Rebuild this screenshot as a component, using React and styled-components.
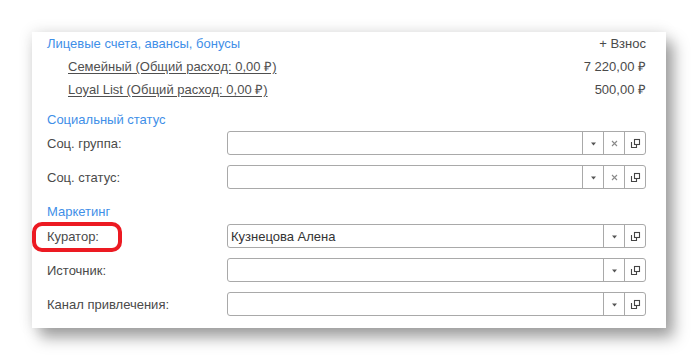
import React from "react";
import styled, { createGlobalStyle } from "styled-components";

const GlobalStyle = createGlobalStyle`
  html, body {
    margin: 0;
    padding: 0;
    background: #ffffff;
    font-family: "Liberation Sans", Arial, sans-serif;
  }
`;

const Page = styled.div`
  width: 698px;
  height: 361px;
  padding: 32px 0 0 32px;
  box-sizing: border-box;
`;

const Card = styled.div`
  width: 634px;
  height: 296px;
  box-sizing: border-box;
  background: #fff;
  padding: 0 20px 12px 15px;
  box-shadow: 0 0 14px rgba(0, 0, 0, 0.12), 8px 10px 14px rgba(0, 0, 0, 0.34);
  display: flex;
  flex-direction: column;
`;

const Row = styled.div`
  display: flex;
  align-items: center;
  height: ${(p) => p.$h || 23}px;
  margin-top: ${(p) => p.$mt || 0}px;
  font-size: 13px;
  color: #4a4a4a;
  position: relative;
`;

const SectionTitle = styled.div`
  flex: 1;
  color: #3f8fe8;
`;

const Action = styled.div`
  color: #4a4a4a;
`;

const SubLink = styled.a`
  margin-left: 21px;
  flex: 1;
  color: #4f4f4f;
  text-decoration: underline;
  text-underline-offset: 2px;
`;

const Amount = styled.div`
  color: #4a4a4a;
`;

const Label = styled.div`
  width: 180px;
  flex-shrink: 0;
  color: #4a4a4a;
  position: relative;
`;

const Highlight = styled.div`
  position: absolute;
  left: -15px;
  top: -7px;
  width: 90px;
  height: 30px;
  box-sizing: border-box;
  border: 4px solid #ec1a22;
  border-radius: 10px;
`;

const Field = styled.div`
  flex: 1;
  height: 24px;
  box-sizing: border-box;
  border: 1px solid #a9a9a9;
  border-radius: 3px;
  display: flex;
  background: #fff;
`;

const Input = styled.div`
  flex: 1;
  padding-left: 3px;
  display: flex;
  align-items: center;
  color: #333;
  font-size: 13px;
`;

const Btn = styled.div`
  width: 20px;
  flex-shrink: 0;
  border-left: 1px solid #a9a9a9;
  display: flex;
  align-items: center;
  justify-content: center;
`;

const ArrowIcon = () => (
  <svg width="7" height="4" viewBox="0 0 7 4" style={{ marginTop: 2 }}>
    <path d="M1 0.5 H6 L3.5 3.5 Z" fill="#555" />
  </svg>
);

const ClearIcon = () => (
  <svg width="7" height="7" viewBox="0 0 7 7">
    <path d="M1 1 L6 6 M6 1 L1 6" stroke="#8a8a8a" strokeWidth="1.1" />
  </svg>
);

const OpenIcon = () => (
  <svg width="11" height="11" viewBox="0 0 11 11">
    <rect x="4.5" y="1.5" width="5" height="5" fill="none" stroke="#444" strokeWidth="1.1" />
    <path d="M1.5 4 V9.5 H6.5 V7" fill="none" stroke="#444" strokeWidth="1.1" />
  </svg>
);

const Select = ({ value, clear }) => (
  <Field>
    <Input>{value}</Input>
    <Btn>
      <ArrowIcon />
    </Btn>
    {clear && (
      <Btn>
        <ClearIcon />
      </Btn>
    )}
    <Btn>
      <OpenIcon />
    </Btn>
  </Field>
);

const FieldRow = ({ label, value, clear, mt, highlight }) => (
  <Row $h={24} $mt={mt}>
    <Label>
      {highlight && <Highlight />}
      {label}
    </Label>
    <Select value={value} clear={clear} />
  </Row>
);

export default function App() {
  return (
    <Page>
      <GlobalStyle />
      <Card>
        <Row $h={22}>
          <SectionTitle>Лицевые счета, авансы, бонусы</SectionTitle>
          <Action>+ Взнос</Action>
        </Row>
        <Row>
          <SubLink>Семейный (Общий расход: 0,00 ₽)</SubLink>
          <Amount>7 220,00 ₽</Amount>
        </Row>
        <Row>
          <SubLink>Loyal List (Общий расход: 0,00 ₽)</SubLink>
          <Amount>500,00 ₽</Amount>
        </Row>

        <Row $mt={8}>
          <SectionTitle>Социальный статус</SectionTitle>
        </Row>
        <FieldRow label="Соц. группа:" clear />
        <FieldRow label="Соц. статус:" clear mt={10} />

        <Row $mt={11}>
          <SectionTitle>Маркетинг</SectionTitle>
        </Row>
        <FieldRow label="Куратор:" value="Кузнецова Алена" mt={1} highlight />
        <FieldRow label="Источник:" mt={10} />
        <FieldRow label="Канал привлечения:" mt={10} />
      </Card>
    </Page>
  );
}
